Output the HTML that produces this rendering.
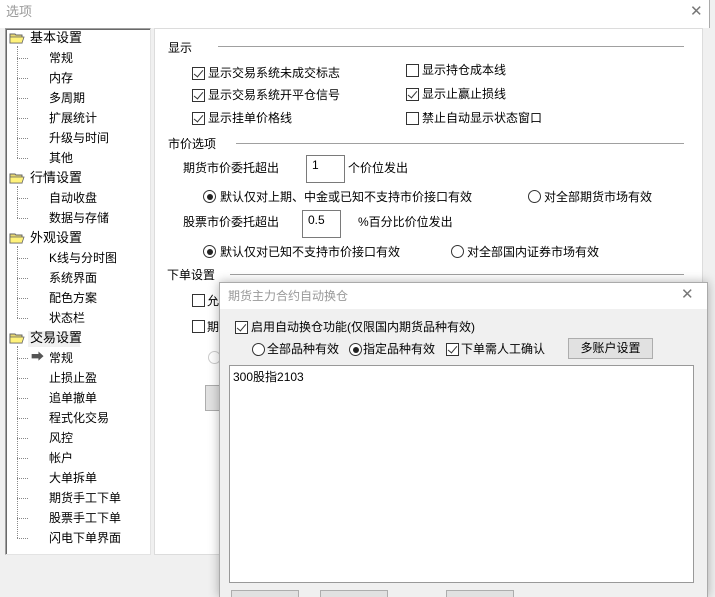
<!DOCTYPE html><html><head><meta charset="utf-8"><style>
*{margin:0;padding:0;box-sizing:border-box}
html,body{width:715px;height:597px;overflow:hidden}
body{position:relative;background:#fff;font-family:"Liberation Sans","Noto Sans CJK SC","Microsoft YaHei",sans-serif;font-size:12px;color:#000}
.a{position:absolute;white-space:nowrap;line-height:14px}
.cb{position:absolute;width:13px;height:13px;border:1px solid #333;background:#fff}
.cb.on::after{content:"";position:absolute;left:3px;top:0px;width:4px;height:8px;border:solid #333;border-width:0 1.5px 1.5px 0;transform:rotate(40deg)}
.rd{position:absolute;width:13px;height:13px;border:1px solid #333;border-radius:50%;background:#fff}
.rd.on::after{content:"";position:absolute;left:2.5px;top:2.5px;width:6px;height:6px;border-radius:50%;background:#222}
.hl{position:absolute;height:1px;background:#a0a0a0}
.fold{position:absolute;width:16px;height:12px}
.dv{position:absolute;border-left:1px dotted #888;width:0}
.dh{position:absolute;border-top:1px dotted #888;height:0;width:11px}
.btn{position:absolute;background:#e1e1e1;border:1px solid #adadad;text-align:center}
.inp{position:absolute;border:1px solid #7a7a7a;background:#fff;padding:2px 0 0 5px}
</style></head><body>
<div style="position:absolute;left:0;top:0;width:710px;height:597px;border-right:1px solid #aaa"></div>
<div style="position:absolute;left:710px;top:0;width:5px;height:597px;background:#f0f0f0"></div>
<div class="a" style="left:6px;top:5px;color:#999;font-size:13px">选项</div>
<div class="a" style="left:690px;top:5px;color:#777;font-size:15px">✕</div>
<div style="position:absolute;left:0;top:555px;width:710px;height:42px;background:#f0f0f0"></div>
<div style="position:absolute;left:0;top:28px;width:5px;height:530px;background:#f0f0f0"></div>
<div style="position:absolute;left:151px;top:28px;width:3px;height:528px;background:#f0f0f0"></div>
<div style="position:absolute;left:703px;top:28px;width:7px;height:528px;background:#f0f0f0"></div>
<div style="position:absolute;left:5px;top:28px;width:146px;height:527px;border:1px solid #a0a0a0;border-right-color:#e3e3e3;border-bottom-color:#e3e3e3;background:#fff;box-shadow:inset 1px 1px 0 #696969"></div>
<div style="position:absolute;left:154px;top:28px;width:549px;height:527px;border:1px solid #dcdcdc;background:#fff"></div>
<div style="position:absolute;left:28px;top:331px;width:52px;height:16px;background:#f0f0f0"></div>
<div class="dv" style="left:17px;top:46px;height:112px"></div>
<div class="dv" style="left:17px;top:186px;height:32px"></div>
<div class="dv" style="left:17px;top:246px;height:72px"></div>
<div class="dv" style="left:17px;top:346px;height:192px"></div>
<div id="tree"></div>
<script>
var T=[["基本设置",1],["常规"],["内存"],["多周期"],["扩展统计"],["升级与时间"],["其他"],["行情设置",1],["自动收盘"],["数据与存储"],["外观设置",1],["K线与分时图"],["系统界面"],["配色方案"],["状态栏"],["交易设置",1],["常规",0,1],["止损止盈"],["追单撤单"],["程式化交易"],["风控"],["帐户"],["大单拆单"],["期货手工下单"],["股票手工下单"],["闪电下单界面"]];
var h="";T.forEach(function(t,i){var y=38+i*20;if(t[1]){h+='<svg class="fold" style="left:9px;top:'+(y-6)+'px" viewBox="0 0 16 12"><path d="M1 2h5l1 1h6v8H1z" fill="#e8d870" stroke="#666"/><path d="M1 5h14l-2 6H1z" fill="#fff27a" stroke="#666" stroke-width=".8"/></svg><div class="a" style="left:30px;top:'+(y-7)+'px;font-size:13px">'+t[0]+'</div>';}else{h+='<div class="dh" style="left:17px;top:'+y+'px"></div><div class="a" style="left:49px;top:'+(y-7)+'px">'+t[0]+'</div>';if(t[2])h+='<div class="a" style="left:31px;top:'+(y-8)+'px;color:#555;font-size:13px">➡</div>';}});
document.getElementById("tree").innerHTML=h;
</script>
<div class="a" style="left:168px;top:41px">显示</div><div class="hl" style="left:218px;top:46px;width:466px"></div>
<div class="cb on" style="left:192px;top:67px"></div><div class="a" style="left:208px;top:66px">显示交易系统未成交标志</div>
<div class="cb on" style="left:192px;top:89px"></div><div class="a" style="left:208px;top:88px">显示交易系统开平仓信号</div>
<div class="cb on" style="left:192px;top:112px"></div><div class="a" style="left:208px;top:111px">显示挂单价格线</div>
<div class="cb" style="left:406px;top:64px"></div><div class="a" style="left:422px;top:63px">显示持仓成本线</div>
<div class="cb on" style="left:406px;top:88px"></div><div class="a" style="left:422px;top:87px">显示止赢止损线</div>
<div class="cb" style="left:406px;top:112px"></div><div class="a" style="left:422px;top:111px">禁止自动显示状态窗口</div>
<div class="a" style="left:168px;top:137px">市价选项</div><div class="hl" style="left:236px;top:143px;width:448px"></div>
<div class="a" style="left:183px;top:161px">期货市价委托超出</div>
<div class="inp" style="left:306px;top:155px;width:39px;height:28px">1</div>
<div class="a" style="left:348px;top:161px">个价位发出</div>
<div class="rd on" style="left:203px;top:190px"></div><div class="a" style="left:220px;top:190px">默认仅对上期、中金或已知不支持市价接口有效</div>
<div class="rd" style="left:528px;top:190px"></div><div class="a" style="left:544px;top:190px">对全部期货市场有效</div>
<div class="a" style="left:183px;top:215px">股票市价委托超出</div>
<div class="inp" style="left:302px;top:210px;width:39px;height:28px">0.5</div>
<div class="a" style="left:358px;top:215px">%百分比价位发出</div>
<div class="rd on" style="left:203px;top:245px"></div><div class="a" style="left:220px;top:245px">默认仅对已知不支持市价接口有效</div>
<div class="rd" style="left:451px;top:245px"></div><div class="a" style="left:467px;top:245px">对全部国内证券市场有效</div>
<div class="a" style="left:167px;top:268px">下单设置</div><div class="hl" style="left:230px;top:274px;width:454px"></div>
<div class="cb" style="left:192px;top:294px"></div><div class="a" style="left:207px;top:294px">允许</div>
<div class="cb" style="left:192px;top:320px"></div><div class="a" style="left:207px;top:320px">期货</div>
<div class="rd" style="left:208px;top:351px;border-color:#ccc"></div>
<div class="btn" style="left:205px;top:385px;width:30px;height:26px"></div>
<div style="position:absolute;left:219px;top:282px;width:489px;height:315px;border:1px solid #aaa;border-bottom:none;background:#f0f0f0;box-shadow:0 0 10px rgba(0,0,0,.3)">
<div style="position:absolute;left:0;top:0;width:487px;height:26px;background:#fff"></div>
<div class="a" style="left:8px;top:6px;color:#999">期货主力合约自动换仓</div>
<div class="a" style="left:461px;top:5px;color:#777;font-size:15px">✕</div>
<div class="cb on" style="left:15px;top:38px"></div><div class="a" style="left:31px;top:37px">启用自动换仓功能(仅限国内期货品种有效)</div>
<div class="rd" style="left:32px;top:60px"></div><div class="a" style="left:47px;top:59px">全部品种有效</div>
<div class="rd on" style="left:129px;top:60px"></div><div class="a" style="left:143px;top:59px">指定品种有效</div>
<div class="cb on" style="left:226px;top:60px"></div><div class="a" style="left:241px;top:59px">下单需人工确认</div>
<div class="btn" style="left:348px;top:55px;width:85px;height:21px;line-height:19px">多账户设置</div>
<div style="position:absolute;left:9px;top:82px;width:465px;height:218px;border:1px solid #999;background:#fff"><div class="a" style="left:3px;top:4px">300股指2103</div></div>
<div class="btn" style="left:11px;top:307px;width:68px;height:20px"></div>
<div class="btn" style="left:100px;top:307px;width:68px;height:20px"></div>
<div class="btn" style="left:226px;top:307px;width:68px;height:20px"></div>
</div>
</body></html>
